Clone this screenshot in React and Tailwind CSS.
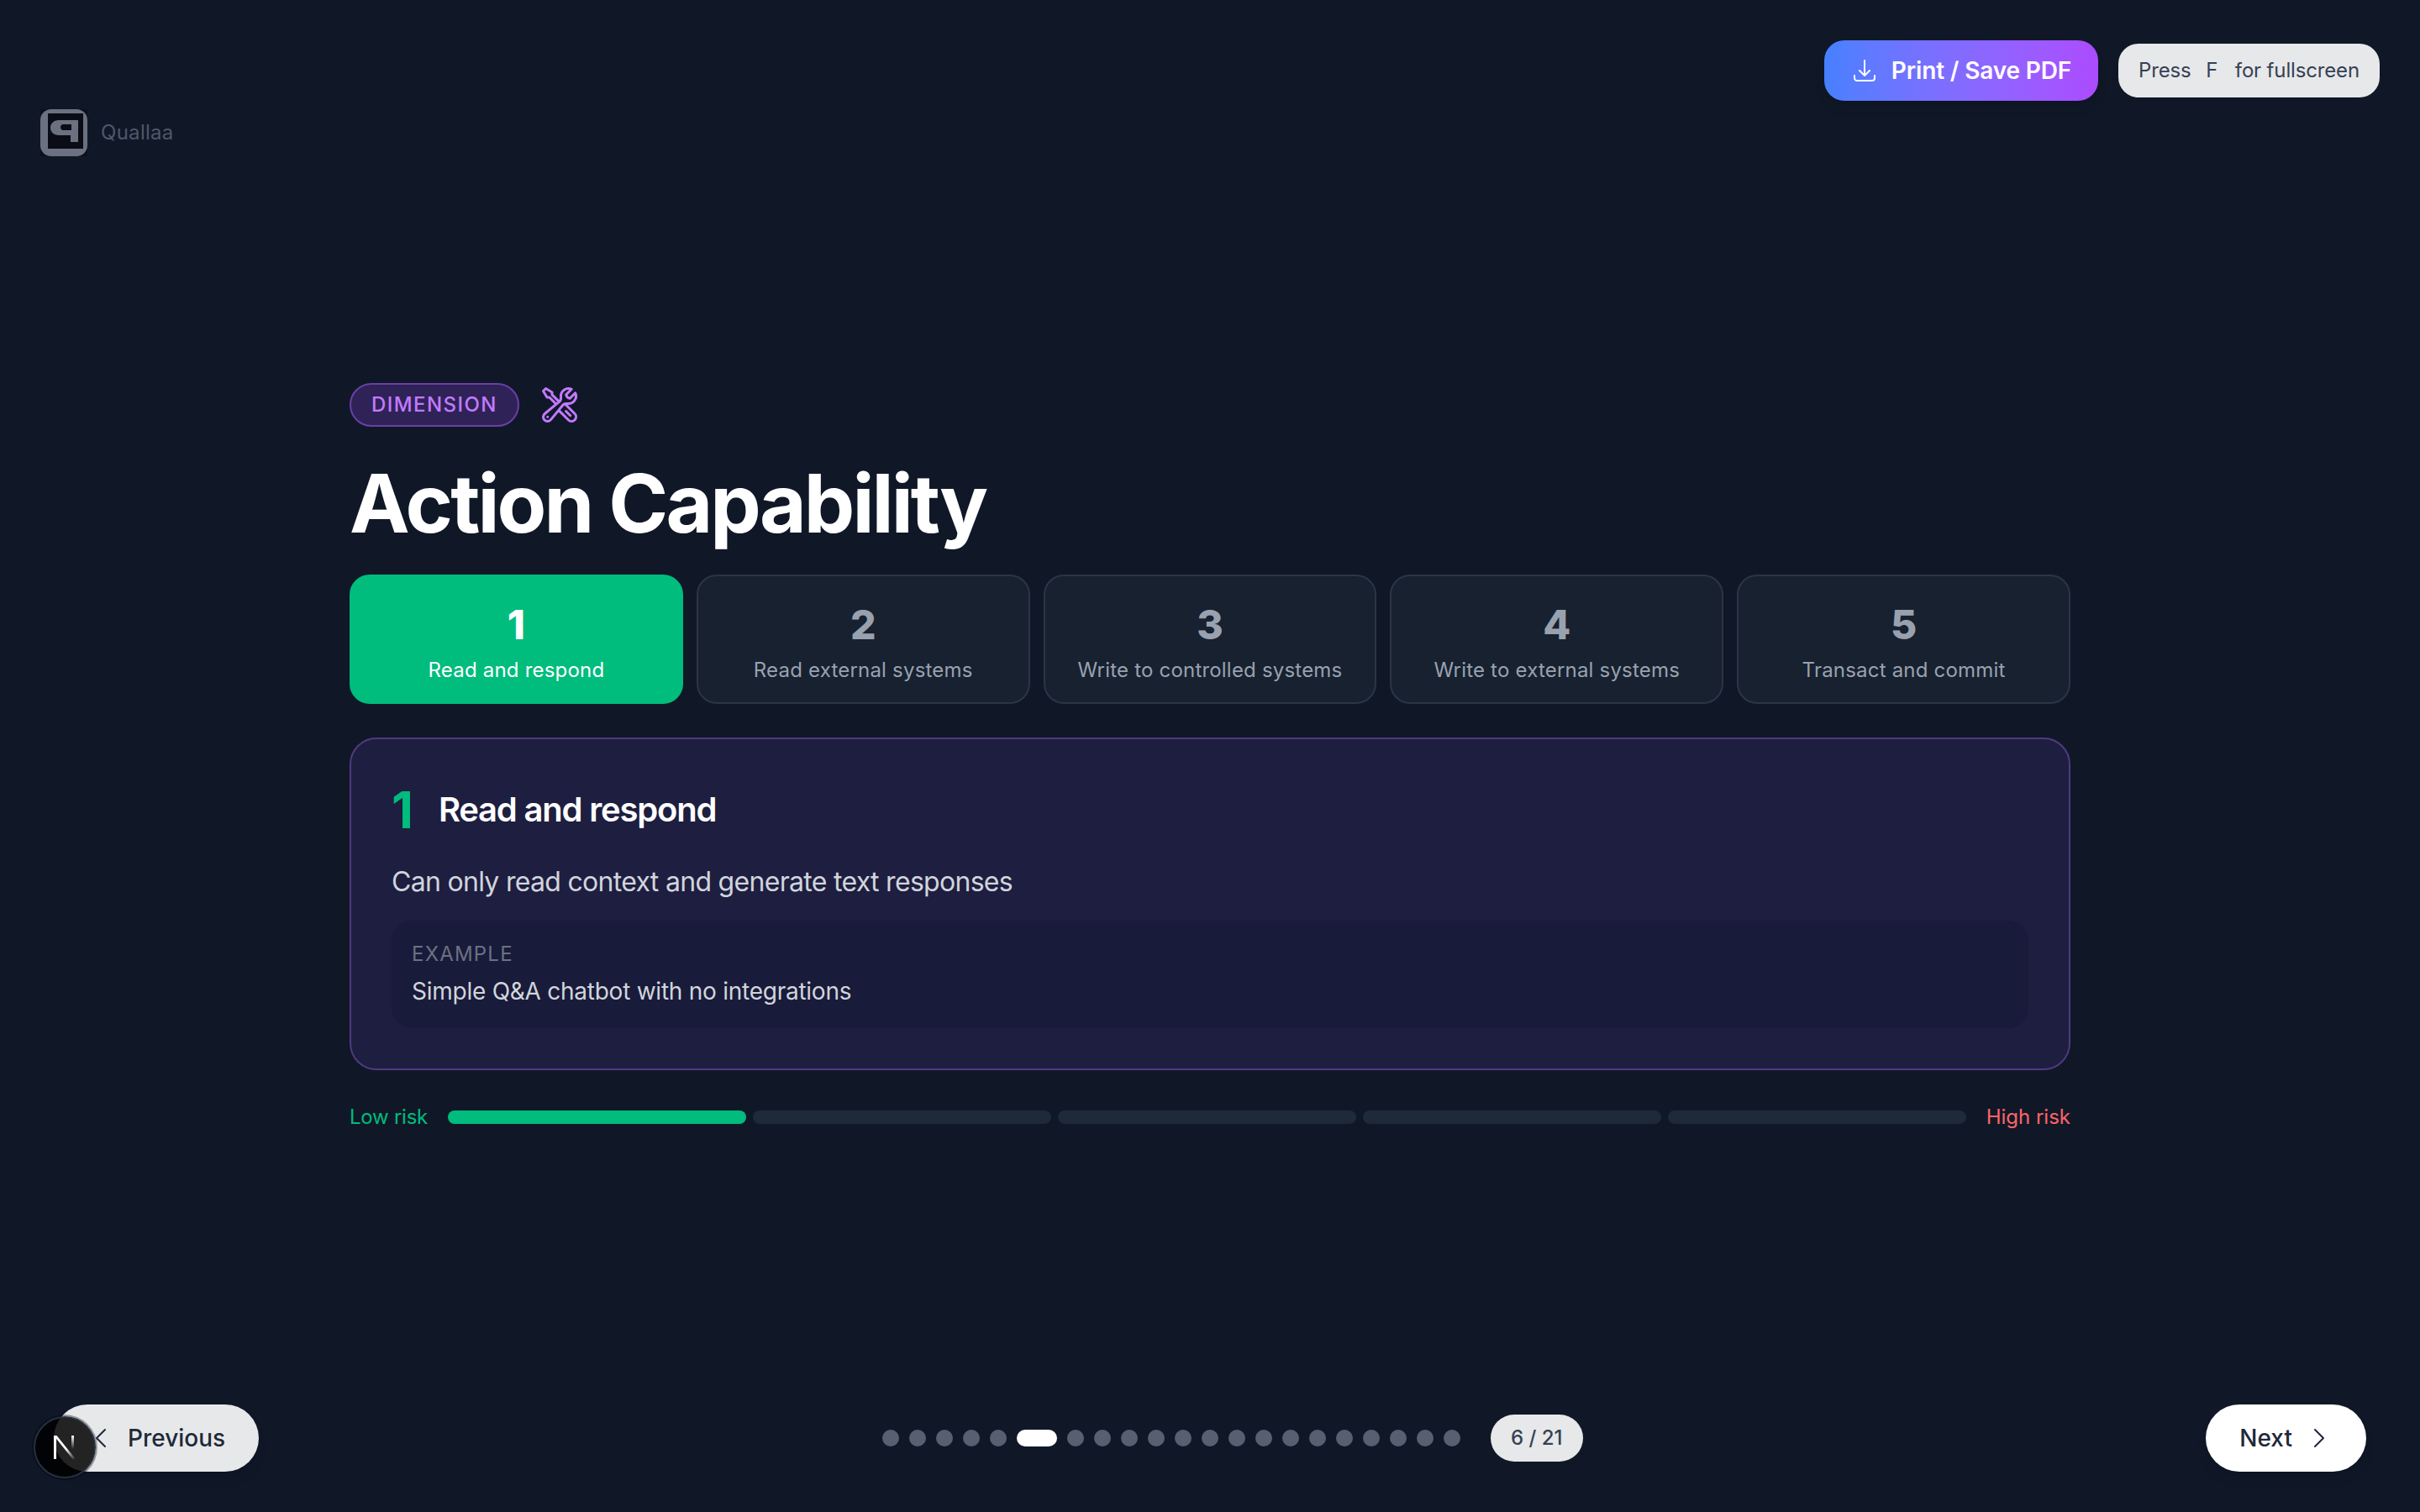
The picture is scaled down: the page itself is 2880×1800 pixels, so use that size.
import { HiOutlineArrowDownTray, HiOutlineChevronLeft, HiOutlineChevronRight, HiOutlineWrenchScrewdriver } from "react-icons/hi2"

const levels = [
  { n: 1, label: "Read and respond" },
  { n: 2, label: "Read external systems" },
  { n: 3, label: "Write to controlled systems" },
  { n: 4, label: "Write to external systems" },
  { n: 5, label: "Transact and commit" },
]

const dots = Array.from({ length: 21 }, (_, i) => i)

function Logo() {
  return (
    <svg width="56" height="56" viewBox="0 0 56 56" className="shrink-0">
      <rect width="56" height="56" fill="#0c1019" />
      <rect width="56" height="56" rx="13" fill="#6c7181" />
      <rect x="9" y="5" width="42" height="42" fill="#0a0d15" />
      <path
        fillRule="evenodd"
        fill="#6c7181"
        d="M45 13V39H36V31H22C16 31 12 27 12 22C12 17 16 13 22 13ZM37 18H27C25 18 24 20 24 21.500C24 23 25 25 27 25H37Z"
      />
    </svg>
  )
}

function NextBadge() {
  return (
    <div className="absolute left-[40px] top-[1686px] flex h-[74px] w-[74px] items-center justify-center rounded-full border-2 border-[#263040] bg-black/85 shadow-[0_0_0_2px_rgba(0,0,0,0.35)]">
      <svg width="26" height="28" viewBox="0 0 26 28">
        <defs>
          <linearGradient id="n-diag" x1="0" y1="0" x2="1" y2="1">
            <stop offset="0.55" stopColor="#fff" />
            <stop offset="1" stopColor="#fff" stopOpacity="0" />
          </linearGradient>
          <linearGradient id="n-right" x1="0" y1="0" x2="0" y2="1">
            <stop offset="0" stopColor="#fff" />
            <stop offset="0.8" stopColor="#fff" stopOpacity="0" />
          </linearGradient>
        </defs>
        <path d="M0 0H3V28H0Z" fill="#fff" />
        <path d="M0 0H3.500L26 28H22.500Z" fill="url(#n-diag)" />
        <path d="M21 0H24V20H21Z" fill="url(#n-right)" />
      </svg>
    </div>
  )
}

export default function App() {
  return (
    <div className="relative grid h-screen grid-rows-[1fr_auto_1fr] bg-[#101828] font-['Inter',sans-serif] text-white">
      <header className="flex items-start justify-between pl-12 pr-12 pt-12">
        <div className="mt-[82px] flex items-center gap-4">
          <Logo />
          <span className="text-[24px] leading-8 tracking-[0.012em] text-[#4f5768]">Quallaa</span>
        </div>
        <div className="flex items-center gap-6">
          <button className="flex h-[72px] items-center gap-4 rounded-3xl bg-gradient-to-r from-[#4580ff] to-[#ac4bff] px-8 text-[28px] font-semibold tracking-[-0.15px] text-white shadow-lg">
            <HiOutlineArrowDownTray className="h-8 w-8" />
            Print / Save PDF
          </button>
          <div className="flex h-16 items-center rounded-3xl bg-white/90 px-6 text-[24px] tracking-[-0.15px] whitespace-pre text-gray-700">
            Press <span className="pl-[11px] pr-[14px]">F</span> for fullscreen
          </div>
        </div>
      </header>

      <main className="mx-auto w-[2048px] pt-[2px]">
        <div className="mb-[43px] flex items-center gap-6">
          <span className="flex h-[52px] items-center rounded-full border-2 border-[#6a3fa8] bg-[#2f2256] px-6 text-[24px] font-medium uppercase tracking-[0.06em] text-purple-400">
            Dimension
          </span>
          <HiOutlineWrenchScrewdriver className="h-12 w-12 text-purple-400" />
        </div>

        <h1 className="mb-[37px] text-[96px] font-bold leading-none tracking-[-0.03em] text-white">Action Capability</h1>

        <div className="mb-10 grid grid-cols-5 gap-4">
          {levels.map((level) => (
            <div
              key={level.n}
              className={
                level.n === 1
                  ? "rounded-3xl border-2 border-emerald-500 bg-emerald-500 pb-[22px] pt-[26px] text-center text-white"
                  : "rounded-3xl border-2 border-[#2b3546] bg-[#172130] pb-[22px] pt-[26px] text-center text-gray-400"
              }
            >
              <div className="text-[48px] font-extrabold leading-16">{level.n}</div>
              <div className="mt-[6px] text-[24px] leading-8 tracking-[0.2px]">{level.label}</div>
            </div>
          ))}
        </div>

        <section className="mb-10 rounded-[32px] border-2 border-[#4f3a80] bg-[#1e1e40] p-12">
          <div className="mb-[26px] flex items-center gap-[30px]">
            <span className="text-[60px] font-bold leading-[72px] text-emerald-500">1</span>
            <h2 className="text-[40px] font-semibold leading-14 tracking-[-1.2px] text-white">Read and respond</h2>
          </div>
          <p className="mb-[22px] text-[32px] leading-12 tracking-[-0.7px] text-gray-300">Can only read context and generate text responses</p>
          <div className="rounded-3xl bg-[#191b3a] p-6">
            <div className="mb-2 text-[24px] uppercase leading-8 tracking-[0.05em] text-gray-500">Example</div>
            <div className="text-[28px] leading-10 tracking-[-0.25px] text-gray-300">Simple Q&amp;A chatbot with no integrations</div>
          </div>
        </section>

        <div className="flex items-center gap-6">
          <span className="text-[24px] leading-8 tracking-[-0.25px] text-emerald-500">Low risk</span>
          <div className="flex flex-1 gap-2">
            {[1, 2, 3, 4, 5].map((seg) => (
              <div key={seg} className={seg === 1 ? "h-4 flex-1 rounded-full bg-emerald-500" : "h-4 flex-1 rounded-full bg-gray-800"} />
            ))}
          </div>
          <span className="text-[24px] leading-8 text-red-400">High risk</span>
        </div>
      </main>

      <footer className="flex items-end justify-between px-16 pb-12">
        <button className="flex h-20 items-center gap-4 rounded-full bg-white/90 px-10 text-[28px] font-medium text-gray-800 shadow-lg">
          <HiOutlineChevronLeft className="h-8 w-8" />
          Previous
        </button>
        <div className="flex h-20 items-center">
          <div className="flex items-center gap-3">
            {dots.map((i) =>
              i === 5 ? (
                <div key={i} className="h-5 w-12 rounded-full bg-white" />
              ) : (
                <div key={i} className="h-5 w-5 rounded-full bg-[#585f70]" />
              ),
            )}
          </div>
          <div className="ml-9 flex h-14 w-[110px] items-center justify-center rounded-full bg-white/90 text-[24px] font-medium text-gray-700">
            6 / 21
          </div>
        </div>
        <button className="flex h-20 items-center gap-4 rounded-full bg-white px-10 text-[28px] font-medium text-gray-800 shadow-lg">
          Next
          <HiOutlineChevronRight className="h-8 w-8" />
        </button>
      </footer>

      <NextBadge />
    </div>
  )
}
